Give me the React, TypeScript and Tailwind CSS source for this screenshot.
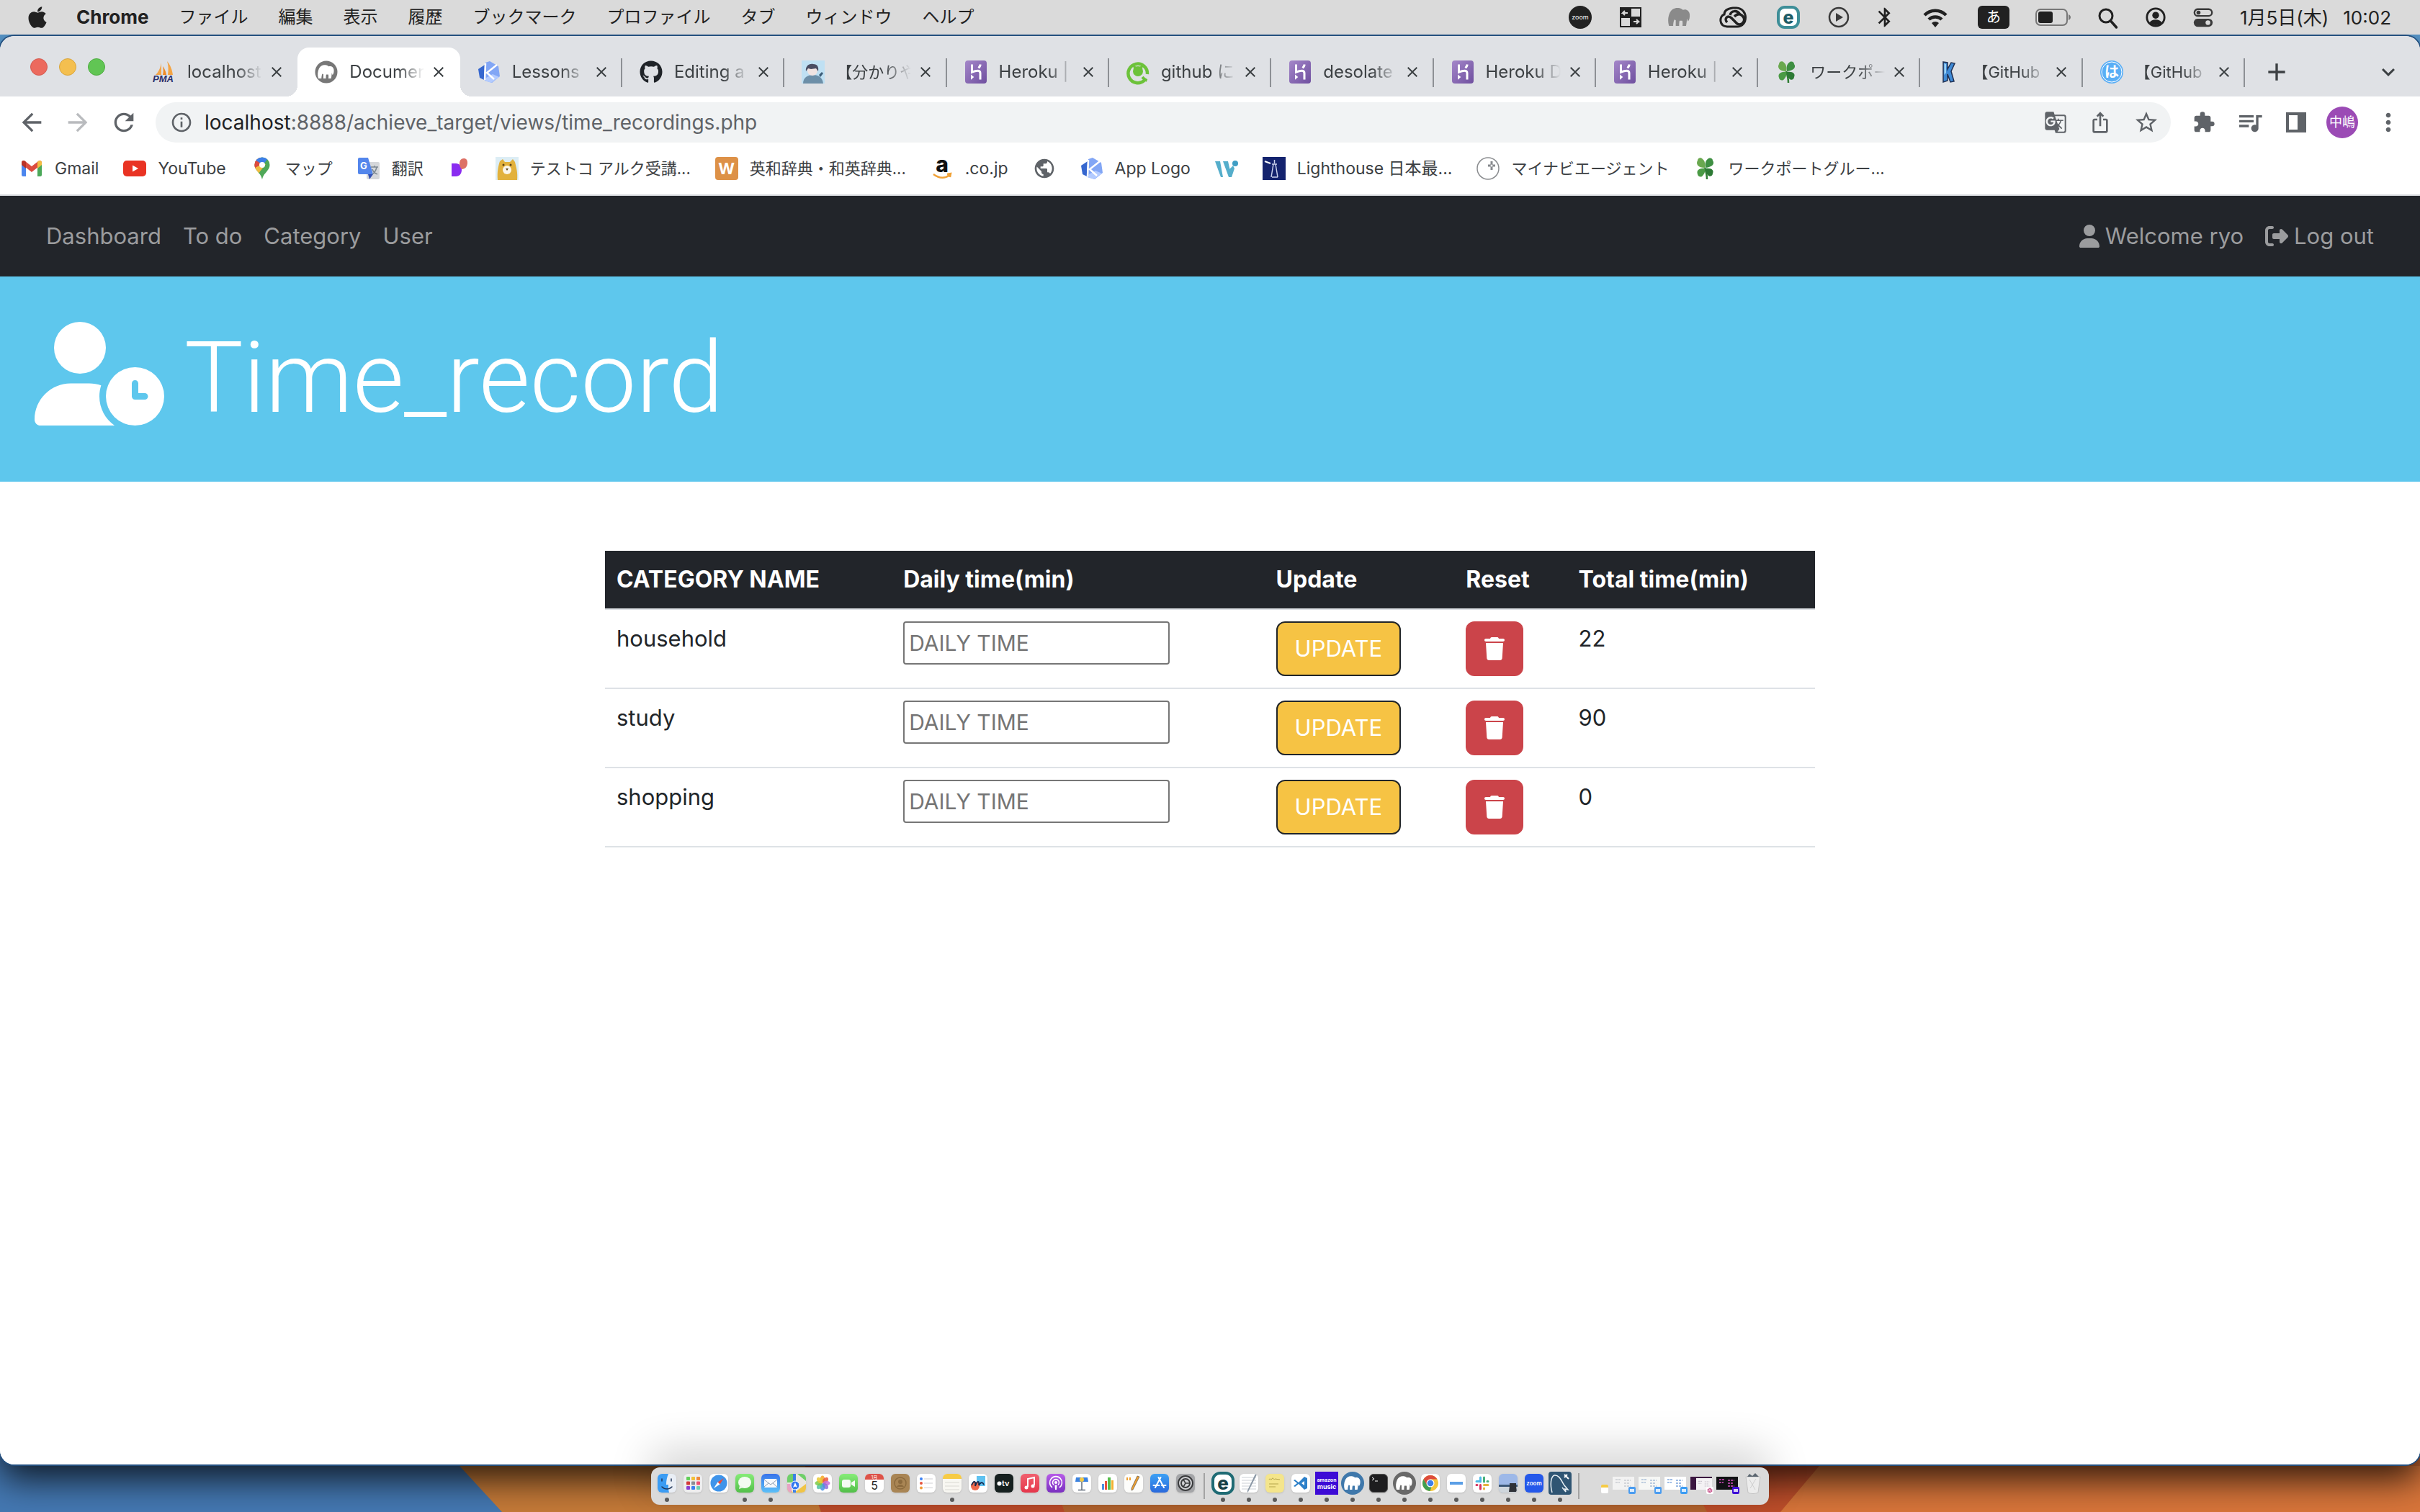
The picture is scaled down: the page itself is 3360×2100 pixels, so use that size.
import React from "react";
import { FaApple, FaUserClock, FaUser, FaRightFromBracket, FaTrash, FaGithub, FaSlack } from "react-icons/fa6";
import {
  MdArrowBack, MdArrowForward, MdRefresh, MdInfoOutline, MdGTranslate, MdIosShare, MdStarBorder,
  MdExtension, MdQueueMusic, MdMoreVert, MdClose, MdAdd, MdExpandMore, MdPublic, MdBluetooth,
} from "react-icons/md";

type Kids = { children?: React.ReactNode };

function Svg({ className = "size-8", box = "0 0 32 32", children }: Kids & { className?: string; box?: string }) {
  return (
    <svg viewBox={box} className={"shrink-0 overflow-visible " + className} fill="none" aria-hidden="true">
      {children}
    </svg>
  );
}

/* ---------- favicons ---------- */

const ELEPHANT =
  "M5 25c-1.500-5-1-10 1-14 2-4 6-5.500 10-4.500 1.500.3 2.500 1 3.500 1.800 3-1.300 6.500.5 7 4.500.3 3-.2 6-1.800 7.500l-1-3c-.3 3-.5 5.500-1 7.700h-3.700c.3-2.500.2-4-.2-5.500h-2.800c-.5 1.500-.5 3.500-.5 5.500h-3.500v-6l-1.500-.5c-.8 2-1.200 4.500-1.200 6.500z";

const PmaIcon = () => (
  <Svg>
    <path d="M12 3v17H4c4-4 7-10 8-17z" fill="#f3a54b" />
    <path d="M14 8c1 5 1 8 0 12h5c-1-5-2-8-5-12z" fill="#f08a24" />
    <path d="M20 1c5 6 7 12 8 19h-7c1-7 1-13-1-19z" fill="#f4a443" />
    <text x="0" y="30" fontSize="13" fontWeight="700" fontStyle="italic" fontFamily="Liberation Sans, sans-serif" fill="#2c2f6b">PMA</text>
  </Svg>
);
const MampIcon = () => (
  <Svg>
    <circle cx="16" cy="16" r="15.500" fill="#777" />
    <path d={ELEPHANT} fill="#fff" />
  </Svg>
);
const KiwiIcon = () => (
  <Svg>
    <path d="M1 12l9-6-1 21-6-3z" fill="#3667cf" />
    <path d="M11 3l6-2 12 7 2 14-11 9-10-3z" fill="#82a6f5" />
    <path d="M12 24l9-5 9 4-11 8-9-3z" fill="#b3cbff" />
    <path d="M11 4l-1 23M27 6L13 17l10 9" stroke="#fff" strokeWidth="2.500" />
  </Svg>
);
const HerokuIcon = () => (
  <Svg>
    <defs>
      <linearGradient id="heroku" x1="0" y1="0" x2="1" y2="1">
        <stop stopColor="#a487c9" />
        <stop offset="1" stopColor="#6f4f9f" />
      </linearGradient>
    </defs>
    <rect x="1" width="30" height="32" rx="4" fill="url(#heroku)" />
    <path d="M10.500 5.500v10.700c3-1.300 5.600-2 8-2 2.800 0 3.500 1.600 3.500 3.300v9" stroke="#fff" strokeWidth="3" />
    <path d="M9 19.500l4.300 3.600L9 26.700z" fill="#fff" />
    <path d="M22.300 5.500c-.3 2-1.200 3.500-2.700 5" stroke="#fff" strokeWidth="3" />
  </Svg>
);
const QiitaIcon = () => (
  <Svg>
    <path d="M25 27.500A13.300 13.300 0 1129 19" stroke="#6cc23a" strokeWidth="4.500" />
    <path d="M22 23c2 2.500 4 4 6.500 5" stroke="#6cc23a" strokeWidth="4" />
    <circle cx="16" cy="15" r="7" fill="#6cc23a" />
    <path d="M10 12L9 6l5 3zM22 12l1-6-5 3z" fill="#6cc23a" />
  </Svg>
);
const PersonIcon = () => (
  <Svg>
    <path d="M0 0h32v32H0z" fill="#bfe0f3" />
    <path d="M2 32c0-8 6-12 14-12s13 4 14 12z" fill="#6d8fa8" />
    <circle cx="15" cy="14" r="7" fill="#f1e4e2" />
    <path d="M6 15c-1-7 4-11 10-10 6 0 8 4 7 10l-3-4-7 1-4-1z" fill="#4a4d63" />
    <path d="M24 20l4-4 2 2-4 5z" fill="#3d5d78" />
  </Svg>
);
const CloverIcon = () => (
  <Svg>
    <path d="M15 15c2 6 3 11 3 16" stroke="#2f7d33" strokeWidth="2.500" />
    <path d="M15 15C6 15 2 10 5 5c0-4 5-5 7-2 3 2 4 7 3 12z" fill="#6aa84f" />
    <path d="M16 15c-1-6 0-10 3-12 3-3 7-1 7 2 3 4 0 9-10 10z" fill="#3f8f43" />
    <path d="M15 16c-8-1-12 3-10 8 0 3 5 5 7 2 2-2 4-5 3-10z" fill="#4a9a45" />
    <path d="M16 16c9-1 12 3 10 7 0 4-5 5-7 2-2-2-3-5-3-9z" fill="#2d7a35" />
  </Svg>
);
const BlueKIcon = () => (
  <Svg>
    <path d="M8 2l6 1v9l5-9 5 1-5 11 4 14-5 1-4-11v9l-6 2z" fill="#3f8ad6" stroke="#1f2f52" strokeWidth="1.500" />
    <path d="M9.500 4l2.500 1v12l-2.500 3z" fill="#9cd2f5" />
  </Svg>
);
const HaIcon = () => (
  <Svg>
    <circle cx="16" cy="16" r="16" fill="#5aaef5" />
    <circle cx="16" cy="16" r="14" stroke="#fff" />
    <text x="16" y="23" textAnchor="middle" fontSize="20" fontWeight="700" fontFamily="Noto Sans CJK JP, sans-serif" fill="#fff">は</text>
  </Svg>
);

/* ---------- bookmark icons ---------- */

const GmailIcon = () => (
  <Svg>
    <path d="M2 8v17a2 2 0 002 2h4V13z" fill="#4c86ee" />
    <path d="M30 8v17a2 2 0 01-2 2h-4V13z" fill="#4ba859" />
    <path d="M2 8c0-3 3-4 5-2l9 7 9-7c2-2 5-1 5 2v2l-14 11L2 10z" fill="#dc4c3f" />
    <path d="M24 7l1-1c2-2 5-1 5 2v3l-6 5z" fill="#f2bd42" />
    <path d="M8 7L7 6C5 4 2 5 2 8v3l6 5z" fill="#b93228" />
  </Svg>
);
const YoutubeIcon = () => (
  <Svg>
    <rect y="5" width="32" height="22" rx="5" fill="#e93323" />
    <path d="M13 11.500v9l8-4.500z" fill="#fff" />
  </Svg>
);
const MapIcon = () => (
  <Svg>
    <defs>
      <clipPath id="pin">
        <path d="M16 31.500c-1-6-4-8-6.500-11.500C7 17 5.500 14.500 5.500 11a10.500 10.500 0 0121 0c0 3.500-1.500 6-4 9-2.500 3.500-5.500 5.500-6.500 11.500z" />
      </clipPath>
    </defs>
    <g clipPath="url(#pin)">
      <path d="M0 0h32v32H0z" fill="#4fa858" />
      <path d="M0 22L18 9l-6-9H0z" fill="#dd4b3e" />
      <path d="M7 5l9 7L26 0H8z" fill="#3d7fe8" />
      <path d="M16 10L4 16l6 8 11-14z" fill="#f1bc41" />
      <path d="M4 15l10-6-8-5z" fill="#dd4b3e" />
    </g>
    <circle cx="16" cy="11" r="4" fill="#fff" />
  </Svg>
);
const TranslateIcon = () => (
  <Svg>
    <rect x="13" y="7" width="18" height="24" rx="2" fill="#d5d7da" />
    <path d="M3 1h12l7 23H3a2 2 0 01-2-2V3a2 2 0 012-2z" fill="#5386ec" />
    <path d="M15 24h7l-5 7z" fill="#3552b5" />
    <text x="4" y="17" fontSize="13" fontWeight="700" fontFamily="Inter, sans-serif" fill="#fff">G</text>
    <path d="M19 14h10M24 12v2M21 24c3-2 5-5 6-10M21 17c1 3 4 6 7 7" stroke="#7b8791" strokeWidth="1.500" />
  </Svg>
);
const PurpleIcon = () => (
  <Svg>
    <path d="M5 9h6c5 0 8 4 8 9s-3 9-8 9H5z" fill="#8a2cf0" />
    <path d="M16 9c0-4 2-7 6-7 3 0 5 2 5 6 0 5-3 9-8 9-2-2-3-5-3-8z" fill="#dd7166" />
  </Svg>
);
const BearIcon = () => (
  <Svg>
    <path d="M0 0h32v32H0z" fill="#dcedf5" />
    <path d="M6 6l4-3 3 4h7l4-4 3 4c2 8 4 15 3 25H3C2 20 4 12 6 6z" fill="#e2b13c" />
    <circle cx="16" cy="18" r="6" fill="#fbf6ea" />
    <circle cx="11" cy="11" r="1.500" fill="#5a4218" />
    <circle cx="21" cy="11" r="1.500" fill="#5a4218" />
    <path d="M14 16h4l-2 3z" fill="#5a4218" />
  </Svg>
);
const WSquareIcon = () => (
  <span className="flex size-8 items-center justify-center rounded bg-[#dd9147] text-[22px] leading-8 font-bold text-white">W</span>
);
const AmazonIcon = () => (
  <Svg>
    <text x="16" y="21" textAnchor="middle" fontSize="30" fontWeight="800" fontFamily="Inter, sans-serif" fill="#111">a</text>
    <path d="M4 24c8 6 16 6 23 1M23 24l5-1-1 5" stroke="#f0a136" strokeWidth="2.500" />
  </Svg>
);
const WantedlyIcon = () => (
  <Svg>
    <path d="M0 6h7l4 22H8zM11 6h7l5 22h-4zM20 17l5-5 2 4-4 12z" fill="#55aecb" />
    <circle cx="28" cy="9" r="4" fill="#3f9ec4" />
  </Svg>
);
const LighthouseIcon = () => (
  <Svg>
    <path d="M0 0h32v32H0z" fill="#14236e" />
    <path d="M12 28l3-18h3l3 18M13 10h7M16.500 4v5M13 28h8" stroke="#c9d0ec" strokeWidth="1.500" />
    <path d="M3 6l8 3" stroke="#fff" strokeWidth="2" />
  </Svg>
);
const MynaviIcon = () => (
  <Svg>
    <circle cx="16" cy="16" r="15" stroke="#8b8d90" strokeWidth="1.500" />
    <path d="M21 6v12M16 12h10" stroke="#85888c" strokeWidth="3" />
    <circle cx="21" cy="12" r="1.500" fill="#fff" />
  </Svg>
);

/* ---------- menu bar ---------- */

const menus = ["ファイル", "編集", "表示", "履歴", "ブックマーク", "プロファイル", "タブ", "ウィンドウ", "ヘルプ"];

function MenuBar() {
  return (
    <header className="relative z-10 flex h-12 items-center justify-between bg-[#dadada] pr-10 pl-9 text-[#212121]">
      <nav className="flex items-center gap-[42px] text-2xl">
        <button aria-label="Apple" className="flex w-8 justify-center"><FaApple className="size-[34px] shrink-0" /></button>
        <button className="-ml-1 text-[26px] font-bold">Chrome</button>
        {menus.map((m) => <button key={m}>{m}</button>)}
      </nav>
      <div className="flex items-center gap-9">
        <span className="flex w-9 justify-center">
          <span className="flex size-8 items-center justify-center rounded-full bg-[#212121] text-[9px] text-white">zoom</span>
        </span>
        <Svg className="h-8 w-8">
          <path d="M1 2h30v28H1z" fill="#212121" />
          <path d="M17 4h12v11H17zM3 17h12v11H3z" fill="#dadada" />
          <path d="M12 10H5l3-3M5 10l3 3M20 22h7l-3-3m3 3l-3 3" stroke="#dadada" strokeWidth="2" />
        </Svg>
        <Svg className="h-9 w-8" box="4 6 24 20"><path d={ELEPHANT} fill="#8a8a8a" /></Svg>
        <Svg className="h-8 w-[46px]" box="0 0 44 32">
          <path d="M21 3C12 4 9 8 9 12c-7 2-8 16 4 17h14C42 29 43 4 26 3z" stroke="#212121" strokeWidth="3" />
          <path d="M13 23c-5-5 1-11 6-6l8 8c7 4 14-6 6-12-4-3-8 0-10 2M17 13c2-7 10-7 14-1" stroke="#212121" strokeWidth="3.500" />
        </Svg>
        <span className="flex w-[34px] justify-center">
          <span className="flex size-8 items-center justify-center rounded-[11px] border-4 border-[#3d8e98] bg-white text-[25px] leading-5 font-extrabold text-[#1e5c66]">e</span>
        </span>
        <Svg className="h-8 w-[34px]">
          <circle cx="16" cy="16" r="13" stroke="#3a3a3a" strokeWidth="2.500" />
          <path d="M12 10v12l10-6z" fill="#3a3a3a" />
        </Svg>
        <span className="flex w-[22px] justify-center"><MdBluetooth className="size-8 shrink-0" /></span>
        <Svg className="h-9 w-[46px]" box="0 0 46 36">
          <path d="M8 15a21 21 0 0130 0M14 21a13 13 0 0118 0" stroke="#212121" strokeWidth="4.500" />
          <path d="M18 26a7 7 0 0110 0l-5 6z" fill="#212121" />
        </Svg>
        <span className="flex h-8 w-11 items-center justify-center rounded-md bg-[#212121] text-xl text-white">あ</span>
        <Svg className="h-8 w-[50px]" box="0 0 50 32">
          <rect x="1" y="5" width="43" height="22" rx="6" stroke="#777" strokeWidth="2" />
          <rect x="4" y="8" width="20" height="16" rx="3" fill="#212121" />
          <path d="M46 12c4 2 4 6 0 8z" fill="#777" />
        </Svg>
        <Svg className="h-8 w-[30px]" box="0 0 30 32">
          <circle cx="12" cy="14" r="9" stroke="#212121" strokeWidth="3" />
          <path d="M18.500 21l8 9" stroke="#212121" strokeWidth="3.500" strokeLinecap="round" />
        </Svg>
        <Svg className="h-8 w-[30px]">
          <circle cx="16" cy="16" r="13" stroke="#212121" strokeWidth="3" />
          <circle cx="16" cy="13" r="5" fill="#212121" />
          <path d="M7 24c3-6 15-6 18 0-4 5-14 5-18 0z" fill="#212121" />
        </Svg>
        <Svg className="h-8 w-[30px]">
          <rect x="3" y="4" width="26" height="10" rx="5" stroke="#3a3a3a" strokeWidth="2.500" />
          <circle cx="9" cy="9" r="3" fill="#3a3a3a" />
          <rect x="2" y="18" width="28" height="12" rx="6" fill="#3a3a3a" />
          <circle cx="23" cy="24" r="3.500" fill="#dadada" />
        </Svg>
        <time className="flex gap-5 text-[26px]"><span>1月5日(木)</span><span>10:02</span></time>
      </div>
    </header>
  );
}

/* ---------- browser chrome ---------- */

const tabs: { icon: React.ReactNode; title: string; ja?: boolean; active?: boolean }[] = [
  { icon: <PmaIcon />, title: "localhost" },
  { icon: <MampIcon />, title: "Document", active: true },
  { icon: <KiwiIcon />, title: "Lessons" },
  { icon: <FaGithub className="size-8 text-[#1f2328]" />, title: "Editing a" },
  { icon: <PersonIcon />, title: "【分かりや", ja: true },
  { icon: <HerokuIcon />, title: "Heroku |" },
  { icon: <QiitaIcon />, title: "github に" },
  { icon: <HerokuIcon />, title: "desolate" },
  { icon: <HerokuIcon />, title: "Heroku D" },
  { icon: <HerokuIcon />, title: "Heroku |" },
  { icon: <CloverIcon />, title: "ワークポー", ja: true },
  { icon: <BlueKIcon />, title: "【GitHub", ja: true },
  { icon: <HaIcon />, title: "【GitHub", ja: true },
];

function TabStrip() {
  return (
    <div className="flex h-[84px] items-end bg-[#dfe1e5] pl-[42px] text-[#3c4043]">
      <div className="mr-[42px] flex h-[82px] items-center gap-4">
        <button aria-label="Close window" className="size-6 rounded-full border border-[#d35a50] bg-[#ec6a5e]" />
        <button aria-label="Minimize window" className="size-6 rounded-full border border-[#d9a53c] bg-[#f4bf4f]" />
        <button aria-label="Zoom window" className="size-6 rounded-full border border-[#4fad42] bg-[#61c554]" />
      </div>
      <div role="tablist" className="flex flex-1">
        {tabs.map((t, i) => (
          <div
            key={i}
            className={
              t.active
                ? "relative flex h-[68px] flex-1 items-center rounded-t-2xl bg-white pl-6 before:absolute before:bottom-0 before:-left-4 before:size-4 before:bg-[radial-gradient(circle_at_0_0,transparent_16px,#fff_16px)] after:absolute after:-right-4 after:bottom-0 after:size-4 after:bg-[radial-gradient(circle_at_100%_0,transparent_16px,#fff_16px)]"
                : "relative flex h-[68px] flex-1 items-center pl-6"
            }
          >
            {t.icon}
            <button
              role="tab"
              aria-selected={!!t.active}
              className={
                (t.ja ? "text-[22px] " : "text-2xl ") +
                "ml-4 w-[104px] overflow-hidden text-left whitespace-nowrap [mask-image:linear-gradient(to_right,#000_65%,transparent)]"
              }
            >
              {t.title}
            </button>
            <button aria-label={"Close " + t.title} className="ml-2"><MdClose className="size-6" /></button>
            {i > 1 && <span className="absolute top-[15px] right-0 h-10 w-0.5 bg-[#8d9095]" />}
          </div>
        ))}
      </div>
      <div className="flex h-[68px] w-[243px] items-center justify-between pr-[26px] pl-6">
        <button aria-label="New tab"><MdAdd className="size-10" /></button>
        <button aria-label="Search tabs"><MdExpandMore className="size-9" /></button>
      </div>
    </div>
  );
}

function Toolbar() {
  return (
    <div className="flex h-[72px] items-center gap-6 pr-[22px] pl-6 text-[#5f6368]">
      <button aria-label="Back"><MdArrowBack className="size-10" /></button>
      <button aria-label="Forward" className="text-[#b9bbbe]"><MdArrowForward className="size-10" /></button>
      <button aria-label="Reload"><MdRefresh className="size-10" /></button>
      <div className="flex h-14 flex-1 items-center gap-4 rounded-full bg-[#f1f3f4] pr-4 pl-5">
        <MdInfoOutline className="size-8" />
        <span className="flex-1 text-[28px]"><span className="text-[#202124]">localhost</span>:8888/achieve_target/views/time_recordings.php</span>
        <div className="flex items-center gap-[30px]">
          <button aria-label="Translate"><MdGTranslate className="size-8" /></button>
          <button aria-label="Share"><MdIosShare className="size-8" /></button>
          <button aria-label="Bookmark"><MdStarBorder className="size-9" /></button>
        </div>
      </div>
      <div className="flex items-center gap-5">
        <button aria-label="Extensions" className="flex w-11 justify-center"><MdExtension className="size-8" /></button>
        <button aria-label="Media" className="flex w-11 justify-center"><MdQueueMusic className="size-10" /></button>
        <button aria-label="Side panel" className="flex w-11 justify-center">
          <Svg className="size-7" box="0 0 28 28"><path d="M0 0h28v28H0zM4 4v20h12V4z" fill="currentColor" fillRule="evenodd" /></Svg>
        </button>
        <button aria-label="Profile" className="flex size-11 items-center justify-center rounded-full bg-[#9b4bb5] text-lg text-white">中嶋</button>
        <button aria-label="Menu" className="flex w-11 justify-center"><MdMoreVert className="size-10" /></button>
      </div>
    </div>
  );
}

const bookmarks: { icon: React.ReactNode; label: string; name?: string; ja?: boolean }[] = [
  { icon: <GmailIcon />, label: "Gmail" },
  { icon: <YoutubeIcon />, label: "YouTube" },
  { icon: <MapIcon />, label: "マップ", ja: true },
  { icon: <TranslateIcon />, label: "翻訳", ja: true },
  { icon: <PurpleIcon />, label: "", name: "Site" },
  { icon: <BearIcon />, label: "テストコ アルク受講...", ja: true },
  { icon: <WSquareIcon />, label: "英和辞典・和英辞典...", ja: true },
  { icon: <AmazonIcon />, label: ".co.jp" },
  { icon: <MdPublic className="size-8 text-[#5f6368]" />, label: "", name: "Web" },
  { icon: <KiwiIcon />, label: "App Logo" },
  { icon: <WantedlyIcon />, label: "", name: "Wantedly" },
  { icon: <LighthouseIcon />, label: "Lighthouse 日本最..." },
  { icon: <MynaviIcon />, label: "マイナビエージェント", ja: true },
  { icon: <CloverIcon />, label: "ワークポートグルー...", ja: true },
];

function Bookmarks() {
  return (
    <nav className="flex h-[66px] items-center gap-[34px] border-b-2 border-[#d9dce0] pb-2 pl-7 text-[#3c4043]">
      {bookmarks.map((b, i) => (
        <a key={i} href="#" aria-label={b.label || b.name} className="flex items-center gap-4 whitespace-nowrap">
          {b.icon}
          {b.label && <span className={b.ja ? "text-[22px]" : "text-[23px]"}>{b.label}</span>}
        </a>
      ))}
    </nav>
  );
}

/* ---------- page ---------- */

const rows = [
  { name: "household", total: 22 },
  { name: "study", total: 90 },
  { name: "shopping", total: 0 },
];

function Page() {
  return (
    <main className="flex-1 bg-white text-[31px] leading-[48px] text-[#212529]">
      <nav className="flex h-28 items-center justify-between bg-[#22252a] px-16 text-[#9b9c9e]">
        <div className="flex gap-[30px]">
          <a href="#">Dashboard</a>
          <a href="#">To do</a>
          <a href="#">Category</a>
          <a href="#">User</a>
        </div>
        <div className="flex gap-[30px]">
          <a href="#" className="flex items-center gap-2"><FaUser className="h-8 w-7" />Welcome ryo</a>
          <a href="#" className="flex items-center gap-2"><FaRightFromBracket className="size-8" />Log out</a>
        </div>
      </nav>
      <div className="flex h-[285px] items-center gap-7 bg-[#5ec7ed] pb-4 pl-12 text-white">
        <FaUserClock className="h-36 w-[180px]" />
        <h1 className="pt-3 font-[Roboto] text-[137px] leading-[172px] font-light">Time_record</h1>
      </div>
      <table className="mx-auto mt-24 w-1/2 table-fixed border-collapse text-left">
        <colgroup>
          <col className="w-[23.7%]" />
          <col className="w-[30.8%]" />
          <col className="w-[15.7%]" />
          <col className="w-[9.3%]" />
          <col />
        </colgroup>
        <thead className="text-[32px]">
          <tr className="border-b-2 border-[#dee2e6] bg-[#22252a] text-white">
            <th className="p-4">CATEGORY NAME</th>
            <th className="p-4">Daily time(min)</th>
            <th className="p-4">Update</th>
            <th className="p-4">Reset</th>
            <th className="p-4">Total time(min)</th>
          </tr>
        </thead>
        <tbody>
          {rows.map((r) => (
            <tr key={r.name} className="border-b-2 border-[#dee2e6] align-top">
              <td className="p-4">{r.name}</td>
              <td className="p-4">
                <input
                  type="text"
                  aria-label={"Daily time for " + r.name}
                  placeholder="DAILY TIME"
                  className="block h-[60px] w-[370px] rounded border-2 border-[#767676] px-1.5 text-[30px] placeholder:text-[#757575]"
                />
              </td>
              <td className="p-4">
                <button className="block h-[76px] rounded-xl border-2 border-[#212529] bg-[#f6c344] px-6 text-white">UPDATE</button>
              </td>
              <td className="p-4">
                <button aria-label={"Reset " + r.name} className="flex h-[76px] items-center rounded-xl bg-[#cb444a] px-[26px] text-white">
                  <FaTrash className="h-8 w-7" />
                </button>
              </td>
              <td className="p-4">{r.total}</td>
            </tr>
          ))}
        </tbody>
      </table>
    </main>
  );
}

/* ---------- dock ---------- */

function Tile({ className, children }: Kids & { className: string }) {
  return (
    <span className={"flex size-[26px] items-center justify-center overflow-hidden rounded-md shadow-sm " + className}>
      {children && <Svg className="size-[26px]" box="0 0 26 26">{children}</Svg>}
    </span>
  );
}

const petals = ["#f5a623", "#e9573f", "#c86dd7", "#8e6fd8", "#4a90e2", "#50c3a5", "#7ac943", "#e8c933"];
const pads = ["#63cf5a", "#f2c037", "#ee8a3c", "#d33a3a", "#8e8e93", "#ef4f72", "#8a3fd1", "#3a7ff0", "#6fd0b0"];

const apps: { name: string; open?: boolean; icon: React.ReactNode }[] = [
  { name: "Finder", open: true, icon: (
    <Tile className="bg-[#e9eef5]">
      <path d="M0 0h15c-2 5-3 9-3 15h3c0 4 0 8 1 11H0z" fill="#3b9cf3" />
      <path d="M6 7v3M19 7v3M6 18c4 4 10 4 14 0" stroke="#22385c" strokeWidth="1.500" strokeLinecap="round" />
    </Tile>
  ) },
  { name: "Launchpad", icon: (
    <Tile className="bg-[#eeeeef]">
      {pads.map((c, i) => <rect key={i} x={4 + (i % 3) * 7} y={4 + Math.floor(i / 3) * 6.500} width="5" height="5" rx="1" fill={c} />)}
    </Tile>
  ) },
  { name: "Safari", icon: (
    <Tile className="bg-white">
      <circle cx="13" cy="13" r="11.500" fill="#3f94ea" />
      <path d="M20 6l-5.500 8.500-3-3z" fill="#ec4b3c" />
      <path d="M6 20l5.500-8.500 3 3z" fill="#fff" />
    </Tile>
  ) },
  { name: "Messages", open: true, icon: (
    <Tile className="bg-linear-to-b from-[#86ec78] to-[#52bf49]">
      <ellipse cx="13" cy="12" rx="9" ry="8" fill="#f3fbf2" />
      <path d="M6 16l-1 5 6-2z" fill="#e6f4e4" />
    </Tile>
  ) },
  { name: "Mail", open: true, icon: (
    <Tile className="bg-linear-to-b from-[#3a73ea] to-[#5cc0f8]">
      <rect x="4" y="7" width="18" height="12" rx="1.500" fill="#f5f8fc" />
      <path d="M4 8l9 7 9-7M4 18l6-5M22 18l-6-5" stroke="#8d9bb0" />
    </Tile>
  ) },
  { name: "Maps", icon: (
    <Tile className="bg-[#e9e6df]">
      <path d="M0 0h8v12H0zM14 0h12v10z" fill="#6fcf6a" />
      <path d="M0 14l8 12H0zM10 26h16V14z" fill="#f0c445" />
      <path d="M0 14h6v12H0z" fill="#e7a3c5" />
      <path d="M8 0h4v26H8z" fill="#3c7fe6" />
      <circle cx="11" cy="16" r="6" fill="#3478f0" stroke="#fff" />
      <path d="M11 12l3 7-3-1.500L8 19z" fill="#fff" />
    </Tile>
  ) },
  { name: "Photos", icon: (
    <Tile className="bg-white">
      {petals.map((c, i) => <ellipse key={c} cx="13" cy="7.500" rx="3.300" ry="5" fill={c} opacity=".85" transform={`rotate(${i * 45} 13 13)`} />)}
    </Tile>
  ) },
  { name: "FaceTime", icon: (
    <Tile className="bg-linear-to-b from-[#86ec78] to-[#52bf49]">
      <rect x="4" y="8" width="12" height="11" rx="3" fill="#f4fbf3" />
      <path d="M17 12l5-3v9l-5-3z" fill="#f4fbf3" />
    </Tile>
  ) },
  { name: "Calendar", icon: (
    <Tile className="bg-white">
      <path d="M0 0h26v8H0z" fill="#dd5348" />
      <text x="13" y="6.500" textAnchor="middle" fontSize="6" fontFamily="Inter, Noto Sans CJK JP, sans-serif" fill="#fff">1月</text>
      <text x="13" y="22" textAnchor="middle" fontSize="16" fontFamily="Inter, sans-serif" fill="#222">5</text>
    </Tile>
  ) },
  { name: "Contacts", icon: (
    <Tile className="bg-[#a98554]">
      <circle cx="13" cy="13" r="8" stroke="#8b6a3d" strokeWidth="1.500" />
      <circle cx="13" cy="11" r="3" fill="#8b6a3d" />
      <path d="M8 18c2-4 8-4 10 0z" fill="#8b6a3d" />
    </Tile>
  ) },
  { name: "Reminders", icon: (
    <Tile className="bg-white">
      <circle cx="6" cy="7" r="2" fill="#3b82f6" /><circle cx="6" cy="13" r="2" fill="#e5533d" /><circle cx="6" cy="19.500" r="2" fill="#f09a37" />
      <path d="M10 7h12M10 13h12M10 19.500h12" stroke="#cfcfd3" />
    </Tile>
  ) },
  { name: "Notes", open: true, icon: (
    <Tile className="bg-[#f8f7f2]">
      <path d="M0 0h26v7H0z" fill="#f6cb46" />
      <path d="M3 12h20M3 17h20M3 22h20" stroke="#d9d8d2" />
    </Tile>
  ) },
  { name: "Freeform", icon: (
    <Tile className="bg-white">
      <path d="M11 3h12v14H11z" fill="#5fc2f0" />
      <circle cx="9" cy="17" r="6" fill="#ef6a4c" />
      <path d="M4 16c3-8 6-6 5 1 3-8 6-8 5-1 3-5 5-5 7-1" stroke="#15294d" strokeWidth="1.800" />
    </Tile>
  ) },
  { name: "TV", icon: (
    <Tile className="bg-[#16201f]">
      <circle cx="6.500" cy="13.500" r="3" fill="#fff" />
      <text x="10" y="17" fontSize="11" fontWeight="600" fontFamily="Inter, sans-serif" fill="#fff">tv</text>
    </Tile>
  ) },
  { name: "Music", icon: (
    <Tile className="bg-linear-to-b from-[#f0606f] to-[#e5354a]">
      <path d="M10 18V7l9-2v11" stroke="#fff" strokeWidth="2" />
      <circle cx="8" cy="19" r="2.500" fill="#fff" /><circle cx="17" cy="17" r="2.500" fill="#fff" />
    </Tile>
  ) },
  { name: "Podcasts", icon: (
    <Tile className="bg-linear-to-b from-[#b75be8] to-[#7a2fc0]">
      <path d="M8 19a8.500 8.500 0 1110 0M10 15.500a4.500 4.500 0 116 0" stroke="#fff" strokeWidth="1.600" />
      <circle cx="13" cy="12" r="2" fill="#fff" /><path d="M11.500 15.500h3L14 22h-2z" fill="#fff" />
    </Tile>
  ) },
  { name: "Keynote", icon: (
    <Tile className="bg-white">
      <path d="M5 5h16l1 6H4z" fill="#3b82e0" />
      <circle cx="13" cy="8" r="3" fill="#f2c744" />
      <path d="M13 11v11M8 22.500h10" stroke="#5f6b7a" strokeWidth="1.500" />
    </Tile>
  ) },
  { name: "Numbers", icon: (
    <Tile className="bg-white">
      <path d="M5 14h3v8H5z" fill="#4a90e2" /><path d="M9 10h3v12H9z" fill="#e8523f" />
      <path d="M13 5h4v17h-4z" fill="#54bd4a" /><path d="M18 9h3v13h-3z" fill="#f2b233" />
    </Tile>
  ) },
  { name: "Pages", icon: (
    <Tile className="bg-[#fdfdfb]">
      <path d="M18 3l3 1-9 18-2 1v-3z" fill="#efa032" stroke="#444" strokeWidth=".6" />
      <path d="M4 9V5M8 9V5" stroke="#efa032" strokeWidth="2" />
    </Tile>
  ) },
  { name: "App Store", icon: (
    <Tile className="bg-linear-to-b from-[#3ea1f4] to-[#2a69dc]">
      <path d="M14.500 5L7 19M11.500 5L19 19M4.500 16h8M16 16h5.500" stroke="#fff" strokeWidth="2" strokeLinecap="round" />
    </Tile>
  ) },
  { name: "Settings", icon: (
    <Tile className="bg-[#a4a5a8]">
      <circle cx="13" cy="13" r="10" fill="#d0d1d4" stroke="#3a3b3d" strokeWidth="2" />
      <circle cx="13" cy="13" r="6" stroke="#3a3b3d" strokeWidth="2" />
      <path d="M13 13h6M13 13l-3-5M13 13l-3 5" stroke="#3a3b3d" strokeWidth="1.500" />
    </Tile>
  ) },
];

const running: { name: string; icon: React.ReactNode }[] = [
  { name: "e", icon: <span className="flex size-8 items-center justify-center rounded-[12px] border-4 border-[#1f6b74] bg-white text-[26px] leading-5 font-extrabold text-[#173f47]">e</span> },
  { name: "TextEdit", icon: (
    <Tile className="bg-white">
      <path d="M3 5h20M3 9h20M3 13h20M3 17h20M3 21h20" stroke="#ccd0d6" />
      <path d="M22 0l2 1L12 25l-1 1v-3z" fill="#8a97a5" />
    </Tile>
  ) },
  { name: "Stickies", icon: (
    <Tile className="bg-[#f4e58c]">
      <path d="M5 8c2-4 2 3 4-1s2 3 4 0l7 1M5 14h13M5 18h9" stroke="#b5a54a" />
    </Tile>
  ) },
  { name: "Visual Studio Code", icon: (
    <Tile className="bg-white">
      <path d="M18 4l4 2v14l-4 2-8-8-5 4-2-1 5-4-5-4 2-1 5 4zm0 6l-4 3 4 3z" fill="#2c80c9" />
    </Tile>
  ) },
  { name: "Amazon Music", icon: (
    <span className="flex size-8 flex-col items-center justify-center bg-[#3d0bd6] text-[7px] leading-[9px] font-bold text-white"><span>amazon</span><span className="text-[9px]">music</span></span>
  ) },
  { name: "MAMP", icon: <Svg><circle cx="16" cy="16" r="16" fill="#3f78ab" /><path d={ELEPHANT} fill="#fff" /></Svg> },
  { name: "Terminal", icon: (
    <Tile className="border border-[#555] bg-[#1d1d1f]">
      <path d="M4 5l3 2-3 2M8 10h4" stroke="#fff" />
    </Tile>
  ) },
  { name: "MAMP server", icon: <Svg><circle cx="16" cy="16" r="16" fill="#686868" /><path d={ELEPHANT} fill="#fff" /></Svg> },
  { name: "Chrome", icon: (
    <Tile className="bg-white">
      <circle cx="13" cy="13" r="11" fill="#f4c63d" />
      <path d="M3.500 7.500a11 11 0 0119 0H13l-5 8z" fill="#dd4b3c" />
      <path d="M3.500 7.500L8.500 16l6 2-2 6A11 11 0 013.500 7.500z" fill="#3f9f52" />
      <circle cx="13" cy="13" r="5.500" fill="#fff" /><circle cx="13" cy="13" r="4.300" fill="#3f7fe8" />
    </Tile>
  ) },
  { name: "Window app", icon: <Tile className="bg-white"><path d="M4 11h18v4H4z" fill="#5b9fe6" /></Tile> },
  { name: "Slack", icon: (
    <Tile className="bg-white">
      <path d="M10.500 5v6M5 10.500h5" stroke="#4fbbe9" strokeWidth="3" strokeLinecap="round" />
      <path d="M15.500 5v6M21 10.500h-1" stroke="#47b07c" strokeWidth="3" strokeLinecap="round" />
      <path d="M15.500 15.500H21M15.500 21v-1" stroke="#e6b23d" strokeWidth="3" strokeLinecap="round" />
      <path d="M10.500 15.500V21M5 15.500h1" stroke="#d7335f" strokeWidth="3" strokeLinecap="round" />
    </Tile>
  ) },
  { name: "Preview", icon: (
    <Tile className="bg-[#9db8e8]">
      <path d="M0 15h26v3H0z" fill="#3c5878" /><path d="M0 18h26v8H0z" fill="#cfd6dc" />
      <path d="M15 13h9v4l1 8H14l1-8z" fill="#2f3238" />
    </Tile>
  ) },
  { name: "Zoom", icon: (
    <Tile className="bg-[#2458ea]">
      <text x="13" y="15.500" textAnchor="middle" fontSize="8" fontWeight="600" fontFamily="Inter, sans-serif" fill="#fff">zoom</text>
    </Tile>
  ) },
  { name: "MySQL Workbench", icon: (
    <Svg>
      <rect width="32" height="32" rx="4" fill="#2f5573" />
      <path d="M5 29C2 18 3 7 8 5c7-1 10 8 14 14l5 6-4-1 1 4-5-6" stroke="#e9f0f5" strokeWidth="1.500" />
      <path d="M22 4l6 6M22 8l4-4" stroke="#fff" strokeWidth="2" />
    </Svg>
  ) },
];

const minimized = [
  { name: "Mail list", body: "bg-[#f2f2f2]", lines: "#c9ccd1", badge: "bg-[#4a9cf0]" },
  { name: "Mail message", body: "bg-[#f6f7f5]", lines: "#a9bfd8", badge: "bg-[#4a9cf0]" },
  { name: "Finder window", body: "bg-white", lines: "#7fa6dd", badge: "bg-[#3b9cf3]" },
  { name: "Slack window", body: "bg-[#f4f2f4] border-l-8 border-t-2 border-[#3b1640]", lines: "#c9c3cc", badge: "bg-white" },
  { name: "Music window", body: "bg-[#111114]", lines: "#d44fc0", badge: "bg-[#3d0bd6]" },
];

function DockItem({ name, open, children }: Kids & { name: string; open?: boolean }) {
  return (
    <button aria-label={name} className="flex w-9 flex-col items-center gap-1 pt-1.5">
      <span className="flex h-8 items-center justify-center">{children}</span>
      {open && <span className="size-1.5 rounded-full bg-[#5b5b5b]" />}
    </button>
  );
}

const Divider = () => <span className="mx-[7px] mt-2 h-9 w-0.5 bg-[#a3a3a3]" />;

function Dock() {
  return (
    <footer className="relative z-10 flex h-[66px] justify-center pt-1">
      <div className="flex h-[52px] rounded-xl bg-[#dadada] px-1 shadow-[0_-20px_60px_rgba(0,0,0,0.2)]">
        {apps.map((a) => <DockItem key={a.name} name={a.name} open={a.open}>{a.icon}</DockItem>)}
        <Divider />
        {running.map((a) => <DockItem key={a.name} name={a.name} open>{a.icon}</DockItem>)}
        <Divider />
        <DockItem name="Minimized note">
          <span className="mt-4 ml-5 h-3 w-2.5 rounded-[2px] border-t-4 border-[#f6cb46] bg-white" />
        </DockItem>
        {minimized.map((m) => (
          <DockItem key={m.name} name={m.name}>
            <span className={"relative flex h-[18px] w-[30px] " + m.body}>
              <Svg className="size-full shrink" box="0 0 30 18">
                <path d="M4 4h8M4 8h6M16 5h9M16 9h7M16 13h9" stroke={m.lines} strokeWidth="1.500" strokeDasharray="3 1" />
              </Svg>
              <span className={"absolute -right-0.5 -bottom-1.5 flex size-2.5 items-center justify-center rounded-[2px] " + m.badge}>
                {m.name === "Slack window" ? <FaSlack className="size-2 text-[#c0397a]" /> : <span className="h-1 w-1.5 bg-white/80" />}
              </span>
            </span>
          </DockItem>
        ))}
        <DockItem name="Trash">
          <Svg className="h-[30px] w-6" box="0 0 24 30">
            <path d="M2 6h20l-3 22c-4 2-10 2-14 0z" fill="#ececec" stroke="#c4c4c4" />
            <path d="M4 6l3-4 4 3 4-4 5 5z" fill="#5b6670" />
            <path d="M7 10l8 14M16 9L8 22" stroke="#cfcfcf" />
          </Svg>
        </DockItem>
      </div>
    </footer>
  );
}

function Wallpaper() {
  return (
    <svg viewBox="0 0 3360 2100" preserveAspectRatio="none" className="absolute inset-0 size-full" aria-hidden="true">
      <path d="M0 0h3360v2100H0z" fill="#c4632f" />
      <path d="M0 0h760v1000H0zM2560 0h800v1000h-800z" fill="#5a9bd0" />
      <path d="M760 0h900v1000H760z" fill="#c9b04d" />
      <path d="M0 1000h600l97 1100H0z" fill="#4478b2" />
      <path d="M638 2036h480l22 64H697z" fill="#c57a38" />
      <path d="M1118 2036h340l20 64H1140z" fill="#bf4d2b" />
      <path d="M1458 2036h880l32 64H1478z" fill="#b5652f" />
      <path d="M2338 2036h188l-54 64h-102z" fill="#bf4f2b" />
      <path d="M2526 2036h834v64h-888z" fill="#d8753a" />
    </svg>
  );
}

export default function App() {
  return (
    <div className="relative flex min-h-screen flex-col overflow-hidden font-[Inter,'Noto_Sans_CJK_JP',sans-serif]">
      <Wallpaper />
      <div className="relative flex flex-1 flex-col">
        <MenuBar />
        <div className="mt-0.5 flex flex-1 flex-col overflow-hidden rounded-[20px] bg-white shadow-[0_0_0_2px_#24507f,0_20px_50px_rgba(0,0,0,0.8)]">
          <TabStrip />
          <Toolbar />
          <Bookmarks />
          <Page />
        </div>
      </div>
      <Dock />
    </div>
  );
}
